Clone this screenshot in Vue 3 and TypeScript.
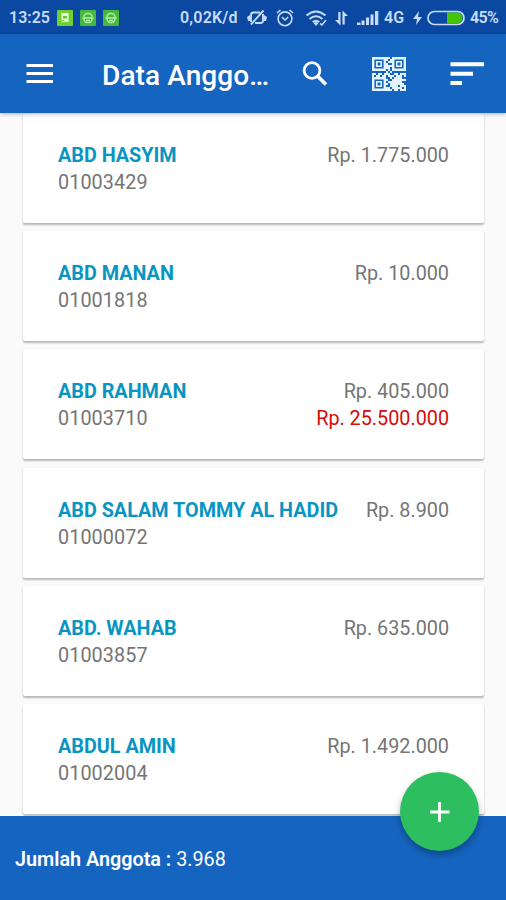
<script setup lang="ts">
interface Member {
  id: string
  name: string
  balance: string
  loan?: string
}

const members: Member[] = [
  { id: '01003429', name: 'ABD HASYIM', balance: 'Rp. 1.775.000' },
  { id: '01001818', name: 'ABD MANAN', balance: 'Rp. 10.000' },
  { id: '01003710', name: 'ABD RAHMAN', balance: 'Rp. 405.000', loan: 'Rp. 25.500.000' },
  { id: '01000072', name: 'ABD SALAM TOMMY AL HADID', balance: 'Rp. 8.900' },
  { id: '01003857', name: 'ABD. WAHAB', balance: 'Rp. 635.000' },
  { id: '01002004', name: 'ABDUL AMIN', balance: 'Rp. 1.492.000' },
]

// Loose modules of the QR glyph, on a 17 x 17 grid
const qrRows: string[] = [
  '.......##........',
  '.......#.#.......',
  '........##.......',
  '.......#.........',
  '.......###.......',
  '.......##........',
  '........#........',
  '.......#.#.......',
  '##.##.###..##.###',
  '#.##.##.###.###.#',
  '.........#.####..',
  '.......#..#######',
  '........#######..',
  '.......#.#######.',
  '.........####.###',
  '.......##.#####.#',
  '.......###.##.###',
]
const qrPath: string = qrRows
  .flatMap((row, y) => [...row].map((c, x) => (c === '#' ? `M${x} ${y}h1v1h-1z` : '')))
  .join('')
</script>

<template>
  <div class="screen">
    <header class="status">
      <span class="time">13:25</span>
      <span class="notes">
        <svg class="note bright" viewBox="0 0 16 16"><path d="M4.500 3h7v9h-7z" fill="#f1ffe4" /><path d="M6 6h4v2.500H6zM4.500 10h3v1h-3z" fill="#63c734" /></svg>
        <svg v-for="n in 2" :key="n" class="note" viewBox="0 0 16 16">
          <rect x="4" y="3.500" width="8" height="9" rx="3.500" fill="none" stroke="#b4eaa6" stroke-width="1.400" />
          <path d="M2.500 8h11M6 10.500h4" stroke="#b4eaa6" stroke-width="1.400" />
        </svg>
      </span>
      <span class="rate">0,02K/d</span>
      <svg class="mute" viewBox="0 0 20 18">
        <path d="M4 13V6q0-2.500 2.500-2.500H13M16 5v6.500q0 2.500-2.500 2.500H8M16.500 1.500L4 15.500" fill="none" stroke="currentColor" stroke-width="1.900" />
        <path d="M0 8l3-2v6H1zM17 6l3 2-1 4h-2z" fill="currentColor" />
      </svg>
      <svg class="alarm" viewBox="0 0 18 18">
        <circle cx="9" cy="9.800" r="6.900" fill="none" stroke="currentColor" stroke-width="1.600" />
        <path d="M1 4l3.500-3M17 4l-3.500-3M5.800 8L9 11l3.200-3" fill="none" stroke="currentColor" stroke-width="1.600" />
      </svg>
      <svg class="wifi" viewBox="0 0 22 18">
        <path d="M1.500 6.500q9.500-8 19 0M4.500 10q6.500-5.500 13 0M7.700 13q3.300-2.600 6.600 0" fill="none" stroke="currentColor" stroke-width="2" />
        <path d="M8.500 14l2.500 3 2.500-3q-2.500-2-5 0z" fill="currentColor" />
        <path d="M15 14.500l2 1.500 4-5" fill="none" stroke="currentColor" stroke-width="1.600" />
      </svg>
      <svg class="arrows" viewBox="0 0 15 16">
        <path d="M4.300 2v8H1l5.500 5.500V2zM8.500 14.500h2.200V6H14L8.500.5z" fill="currentColor" />
      </svg>
      <svg class="signal" viewBox="0 0 22 16">
        <path d="M0 12.500h3.500V15H0zM4.500 10.500h3V15h-3zM9 7.500h3V15H9zM13.500 4.500h3V15h-3zM18 1h3.300v14H18z" fill="currentColor" />
      </svg>
      <span class="net">4G</span>
      <svg class="bolt" viewBox="0 0 10 14"><path d="M6 0L0 8h4l-1 6 6-8H5z" fill="currentColor" /></svg>
      <svg class="battery" viewBox="0 0 38 16">
        <path d="M20 2.500h10a5.500 5.500 0 0 1 0 11H20z" fill="#43c600" />
        <rect x="1" y="1.500" width="36" height="13" rx="6.500" fill="none" stroke="currentColor" stroke-width="1.700" />
      </svg>
      <span class="percent">45%</span>
    </header>

    <nav class="toolbar">
      <button class="menu" aria-label="Menu">
        <svg width="28" height="20" viewBox="0 0 28 20"><path d="M.5 1.500h26.500M.5 9.500h26.500M.5 17.500h26.500" stroke="#fff" stroke-width="3" /></svg>
      </button>
      <h1 class="title">Data Anggo…</h1>
      <button class="search" aria-label="Cari">
        <svg width="26" height="26" viewBox="0 0 26 26">
          <circle cx="10" cy="9.500" r="7.900" fill="none" stroke="#fff" stroke-width="2.800" />
          <path d="M15.700 15.300l8.300 8.200" stroke="#fff" stroke-width="3.600" />
        </svg>
      </button>
      <button class="qr" aria-label="Kode QR">
        <svg width="34" height="34" viewBox="0 0 17 17">
          <path d="M.6.6h5.800v5.800H.6zM10.600.6h5.800v5.800h-5.800zM.6 10.600h5.800v5.800H.6z" fill="none" stroke="#e3f3ff" stroke-width="1.200" />
          <path d="M2.400 2.400h2.200v2.200H2.400zM12.400 2.400h2.200v2.200h-2.200zM2.400 12.400h2.200v2.200H2.400z" fill="none" stroke="#e3f3ff" stroke-width=".8" />
          <path :d="qrPath" fill="#e3f3ff" />
        </svg>
      </button>
      <button class="sort" aria-label="Urutkan">
        <svg width="34" height="24" viewBox="0 0 34 24"><path d="M.5 2.300h34M.5 11.700h22.500M.5 21h11.500" stroke="#fff" stroke-width="4" /></svg>
      </button>
    </nav>

    <main class="list">
      <article v-for="m in members" :key="m.id" class="card">
        <div class="who">
          <strong class="name">{{ m.name }}</strong>
          <span class="code">{{ m.id }}</span>
        </div>
        <div class="money">
          <span>{{ m.balance }}</span>
          <span v-if="m.loan" class="loan">{{ m.loan }}</span>
        </div>
      </article>
    </main>

    <footer class="summary">
      <b>Jumlah Anggota :</b>&nbsp;<span>3.968</span>
      <button class="add" aria-label="Tambah">
        <svg width="20" height="20" viewBox="0 0 20 20"><path d="M9.500 0v20M-.5 10h20" stroke="#fff" stroke-width="2.800" /></svg>
      </button>
    </footer>
  </div>
</template>

<style>
body {
  margin: 0;
  background: #fafafa;
}
</style>

<style scoped>
.screen {
  display: flex;
  flex-direction: column;
  width: 506px;
  height: 900px;
  overflow: hidden;
  background: #fafafa;
  font-family: Roboto, "Liberation Sans", sans-serif;
}
svg {
  display: block;
  flex: none;
}
button {
  display: block;
  flex: none;
  padding: 0;
  border: 0;
  background: none;
}
.status {
  display: flex;
  flex: none;
  align-items: center;
  box-sizing: border-box;
  height: 34px;
  padding: 1px 0 0 9px;
  background: #0a48a2;
  color: #c8dcfa;
  font-size: 16px;
  font-weight: 600;
  white-space: nowrap;
}
.time {
  width: 48px;
}
.notes {
  display: flex;
  gap: 7px;
  width: 123px;
}
.note {
  width: 16px;
  height: 16px;
  border-radius: 1px;
  background: #46b83d;
}
.note.bright {
  background: #6fd031;
}
.rate {
  width: 67px;
  letter-spacing: .2px;
}
.mute {
  width: 20px;
  height: 18px;
  margin-right: 9px;
}
.alarm {
  width: 18px;
  height: 18px;
  margin-right: 11px;
}
.wifi {
  width: 22px;
  height: 18px;
  margin-right: 7px;
}
.arrows {
  width: 15px;
  height: 16px;
  margin-right: 8px;
}
.signal {
  width: 22px;
  height: 16px;
  margin-right: 5px;
}
.net {
  width: 29px;
}
.bolt {
  width: 10px;
  height: 14px;
  margin-right: 4px;
}
.battery {
  width: 38px;
  height: 16px;
  margin-right: 5px;
}
.percent {
  letter-spacing: -.6px;
}
.toolbar {
  position: relative;
  z-index: 1;
  display: flex;
  flex: none;
  align-items: center;
  box-sizing: border-box;
  height: 79px;
  padding: 0 22px 0 26px;
  background: #1565c0;
  box-shadow: 0 1px 4px rgba(0, 0, 0, .3);
}
.menu {
  width: 76px;
}
.title {
  width: 200px;
  margin: 4px 0 0;
  color: #fff;
  font-size: 28px;
  font-weight: 500;
  line-height: 36px;
  letter-spacing: .1px;
  white-space: nowrap;
}
.search {
  width: 70px;
}
.qr {
  width: 78px;
}
.list {
  display: flex;
  flex: 1;
  flex-direction: column;
  gap: 8.200px;
  min-height: 0;
  padding: 0 22px 0 23px;
  overflow: hidden;
}
.card {
  display: flex;
  flex: none;
  justify-content: space-between;
  box-sizing: border-box;
  height: 110px;
  padding: 29.100px 35px 0;
  border-radius: 2px;
  background: #fff;
  box-shadow: 0 1.500px 2px rgba(0, 0, 0, .27);
  color: #757575;
  font-size: 19.800px;
  line-height: 27px;
  white-space: nowrap;
}
.who,
.money {
  display: flex;
  flex-direction: column;
}
.money {
  align-items: flex-end;
}
.name {
  color: #0995c2;
  font-weight: 700;
}
.code {
  letter-spacing: .08px;
}
.loan {
  color: #d50a0a;
}
.summary {
  position: relative;
  display: flex;
  flex: none;
  align-items: center;
  box-sizing: border-box;
  height: 84px;
  padding: 2px 0 0 15px;
  background: #1565c0;
  color: #fff;
  font-size: 19.800px;
}
.summary b {
  font-weight: 600;
}
.add {
  position: absolute;
  top: -44px;
  right: 27px;
  display: grid;
  place-items: center;
  width: 79px;
  height: 79px;
  border-radius: 50%;
  background: #2dbe60;
  box-shadow: 0 4px 7px rgba(0, 0, 0, .3);
}
</style>
